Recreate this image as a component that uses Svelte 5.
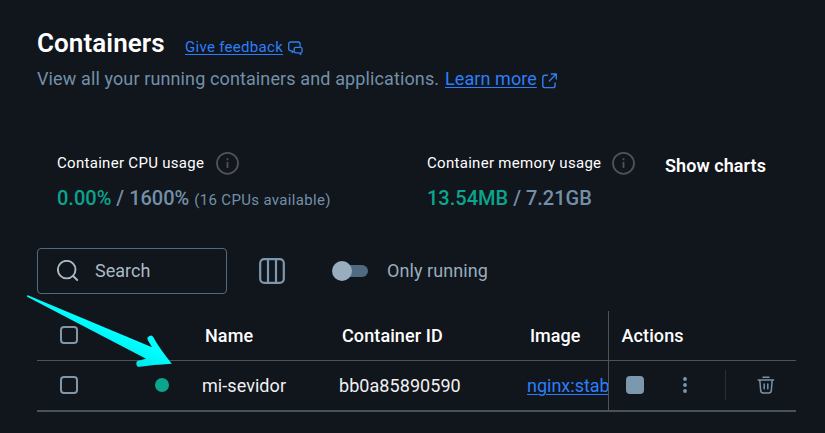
<script>
  const containers = [{ name: 'mi-sevidor', id: 'bb0a85890590', image: 'nginx:stab' }];
</script>

{#snippet info()}
  <svg class="info" width="24" height="24" viewBox="0 0 24 24" fill="none" stroke="#505255" stroke-width="1.8">
    <circle cx="12.5" cy="12.3" r="10.5" />
    <path d="M12.5 11v6M12.5 7.2v2" />
  </svg>
{/snippet}

<main>
  <header>
    <h1>Containers</h1>
    <a class="feedback" href="#feedback">Give feedback</a>
    <svg class="chat" width="16" height="15" viewBox="0 0 16 15" fill="none" stroke="#2f80ee" stroke-width="1.3" stroke-linejoin="round" stroke-linecap="round">
      <path d="M4.2 11.6V9.8H3C1.3 9.7.7 8.9.7 7.5V3.2C.7 1.6 1.5 1 3 1h7c1.4 0 2.1.7 2.1 2v2.3M4.2 11.6l1.3-1.1" />
      <path d="M7.8 6.3h4.7c1.1 0 1.6.6 1.6 1.6v2.3c0 .9-.4 1.4-1.3 1.5v1.8l-2-1.7h-3c-1.1 0-1.6-.6-1.6-1.6V7.9c0-1 .5-1.6 1.6-1.6Z" />
    </svg>
  </header>
  <div class="subtitle">
    <span>View all your running containers and applications.</span>
    <a href="#learn">Learn more</a>
    <svg width="16" height="16" viewBox="0 0 16 16" fill="none" stroke="#2f80ee" stroke-width="1.4" stroke-linecap="round" stroke-linejoin="round">
      <path d="M5.5 2.3H3C1.5 2.3.8 3 .8 4.5v7.9c0 1.5.7 2.2 2.2 2.2h7.9c1.5 0 2.2-.7 2.2-2.2V10M9.3 1h5v5M14 1.3 7.3 8" />
    </svg>
  </div>

  <section class="stats">
    <div class="cpu">
      <div class="label"><span>Container CPU usage</span>{@render info()}</div>
      <div class="value"><b>0.00%</b> / 1600% <small>(16 CPUs available)</small></div>
    </div>
    <div class="memory">
      <div class="label mem"><span>Container memory usage</span>{@render info()}</div>
      <div class="value"><b>13.54MB</b> / 7.21GB</div>
    </div>
    <button class="charts">Show charts</button>
  </section>

  <section class="tools">
    <div class="search">
      <svg width="22" height="22" viewBox="0 0 22 22" fill="none" stroke="#a9bac6" stroke-width="1.9" stroke-linecap="round">
        <circle cx="9.7" cy="9.6" r="8.8" /><path d="m16.1 16 4.1 4" />
      </svg>
      <span>Search</span>
    </div>
    <svg class="columns" width="26" height="26" viewBox="0 0 26 26" fill="none" stroke="#7c98af" stroke-width="2.2">
      <rect x="1.2" y="1.2" width="23.6" height="23.6" rx="4" /><path d="M9 1v24M17 1v24" />
    </svg>
    <span class="toggle"><i></i></span>
    <span class="only">Only running</span>
  </section>

  <section class="table">
    <div class="row head">
      <span class="check"><i></i></span>
      <span class="status"></span>
      <span class="name">Name</span>
      <span class="id">Container ID</span>
      <span class="image">Image</span>
      <span class="actions">Actions</span>
    </div>
    {#each containers as c}
      <div class="row body">
        <span class="check"><i></i></span>
        <span class="status"><i></i></span>
        <span class="name">{c.name}</span>
        <span class="id">{c.id}</span>
        <span class="image"><a href="#image">{c.image}</a></span>
        <span class="actions">
          <i class="stop"></i>
          <svg class="more" width="6" height="16" viewBox="0 0 6 16" fill="#7c98af">
            <circle cx="3" cy="2" r="1.9" /><circle cx="3" cy="8" r="1.9" /><circle cx="3" cy="14" r="1.9" />
          </svg>
          <i class="divider"></i>
          <svg class="trash" width="18" height="18" viewBox="0 0 18 18" fill="none" stroke="#7893a9" stroke-width="1.5" stroke-linecap="round" stroke-linejoin="round">
            <path d="M1.2 3.9h15.4M6 1.2h6M2.8 4.2l.9 10.5c.2 1.6.9 2.3 2.4 2.3h5.8c1.5 0 2.2-.7 2.4-2.3l.9-10.5M7.2 8v4.8M10.8 8v4.8" />
          </svg>
        </span>
      </div>
    {/each}
  </section>

  <svg class="arrow" width="148" height="76" viewBox="0 0 148 76">
    <defs>
      <linearGradient id="cyan" gradientUnits="userSpaceOnUse" x1="98" y1="33" x2="87" y2="58">
        <stop offset="0.3" stop-color="#00ffff" /><stop offset="1" stop-color="#00e8ec" />
      </linearGradient>
    </defs>
    <path fill="url(#cyan)" d="M1.8 0.2 L126 52.3 L122 45.5 A3.1 3.1 0 0 1 127.4 42.3 Q133 53 145.8 68.8 Q126 70 113.8 71.8 A3.1 3.1 0 0 1 113.2 65.5 L120 63.7 L1.2 1.8 Q0.2 0.3 1.8 0.2Z" />
  </svg>
</main>

<style>
  :global(body) { background: #11151c; }
  main {
    position: relative;
    box-sizing: border-box;
    width: 825px;
    height: 433px;
    padding: 27px 29px 0 37px;
    overflow: hidden;
    background: #11151c;
    color: #7390a8;
    font-family: Roboto, sans-serif;
    font-size: 18px;
  }
  svg { display: block; flex: none; }
  span, a, small { white-space: nowrap; }
  a { color: #2b7ffb; text-decoration: underline; text-underline-offset: 2px; text-decoration-thickness: 1px; }
  header { display: flex; height: 32px; }
  h1 { width: 148px; margin: 0; color: #fff; font-size: 26px; font-weight: 600; line-height: 32px; letter-spacing: 0.08px; }
  .feedback { width: 103px; font-size: 15px; line-height: 41px; letter-spacing: 0.3px; }
  .chat { margin-top: 14px; }
  .subtitle { display: flex; height: 40px; line-height: 40px; }
  .subtitle span { width: 408px; letter-spacing: 0.12px; }
  .subtitle a { width: 97px; letter-spacing: 0.08px; }
  .subtitle svg { margin-top: 14px; }
  .stats { display: flex; height: 149px; }
  .cpu { width: 370px; padding: 52px 0 0 20px; box-sizing: border-box; }
  .memory { width: 238px; padding: 52px 0 0 20px; box-sizing: border-box; }
  .label { display: flex; align-items: center; height: 24px; color: #fff; font-size: 15px; font-weight: 450; letter-spacing: 0.3px; }
  .label span { width: 158px; }
  .mem span { width: 184px; }
  .value { margin-top: 10px; line-height: 26px; font-size: 20px; font-weight: 500; white-space: nowrap; }
  b { color: #0aa58c; font-weight: 500; }
  small { font-size: 15px; font-weight: 400; letter-spacing: 0.33px; }
  .charts { align-self: flex-start; margin: 54px 0 0; padding: 0 0 0 20px; border: 0; background: none; color: #fff; font: 600 18px/26px Roboto, sans-serif; letter-spacing: 0.06px; white-space: nowrap; }
  .tools { display: flex; align-items: center; height: 46px; }
  .search { display: flex; align-items: center; gap: 16px; box-sizing: border-box; width: 190px; height: 46px; padding-left: 19px; border: 1px solid #4f6b82; border-radius: 4px; color: #a9bac6; }
  .search span { line-height: 22px; }
  .columns { margin-left: 32px; }
  .toggle { display: flex; align-items: center; width: 33px; height: 12px; margin-left: 50px; border-radius: 6px; background: #4f6b81; }
  .toggle i { width: 20px; height: 20px; margin-left: -3px; border-radius: 50%; background: #98adbd; }
  .only { margin-left: 19px; padding-bottom: 2px; color: #98adbd; letter-spacing: 0.08px; }
  .table { margin-top: 17px; }
  .row { display: flex; width: 759px; height: 49px; line-height: 49px; border-bottom: 1px solid #505255; color: #fff; }
  .body { border-bottom: 2px solid #46535c; color: #f0f1f2; }
  .head { font-weight: 500; letter-spacing: 0.1px; }
  .head .image { letter-spacing: 0; }
  .check { display: flex; align-items: center; width: 115px; padding: 0 0 2px 23px; box-sizing: border-box; }
  .check i { box-sizing: border-box; width: 18px; height: 18px; border: 2px solid #8196a8; border-radius: 4px; }
  .status { display: flex; align-items: center; width: 50px; padding-bottom: 1px; box-sizing: border-box; }
  .status i { width: 14px; height: 14px; margin-left: 2.5px; border-radius: 50%; background: #0aa58c; }
  .name { width: 137px; padding-left: 3px; box-sizing: border-box; }
  .id { width: 188px; padding-left: 3px; box-sizing: border-box; }
  .image { width: 81px; padding-left: 3px; box-sizing: border-box; overflow: hidden; }
  .body .name, .body .id, .body .image { padding-left: 0; }
  .body .name, .body .id { font-weight: 450; letter-spacing: 0.06px; }
  .actions { display: flex; align-items: center; width: 188px; padding-left: 12.5px; box-sizing: border-box; border-left: 1px solid #505255; }
  .body .actions { padding-bottom: 2px; }
  .stop { width: 18px; height: 18px; margin-left: 4.5px; border-radius: 4px; background: #7c98af; }
  .more { margin-left: 38px; }
  .divider { width: 1px; height: 30px; margin-left: 37px; background: #2a2e34; }
  .trash { margin-left: 31px; }
  .arrow { position: absolute; left: 26px; top: 295px; pointer-events: none; }
</style>
